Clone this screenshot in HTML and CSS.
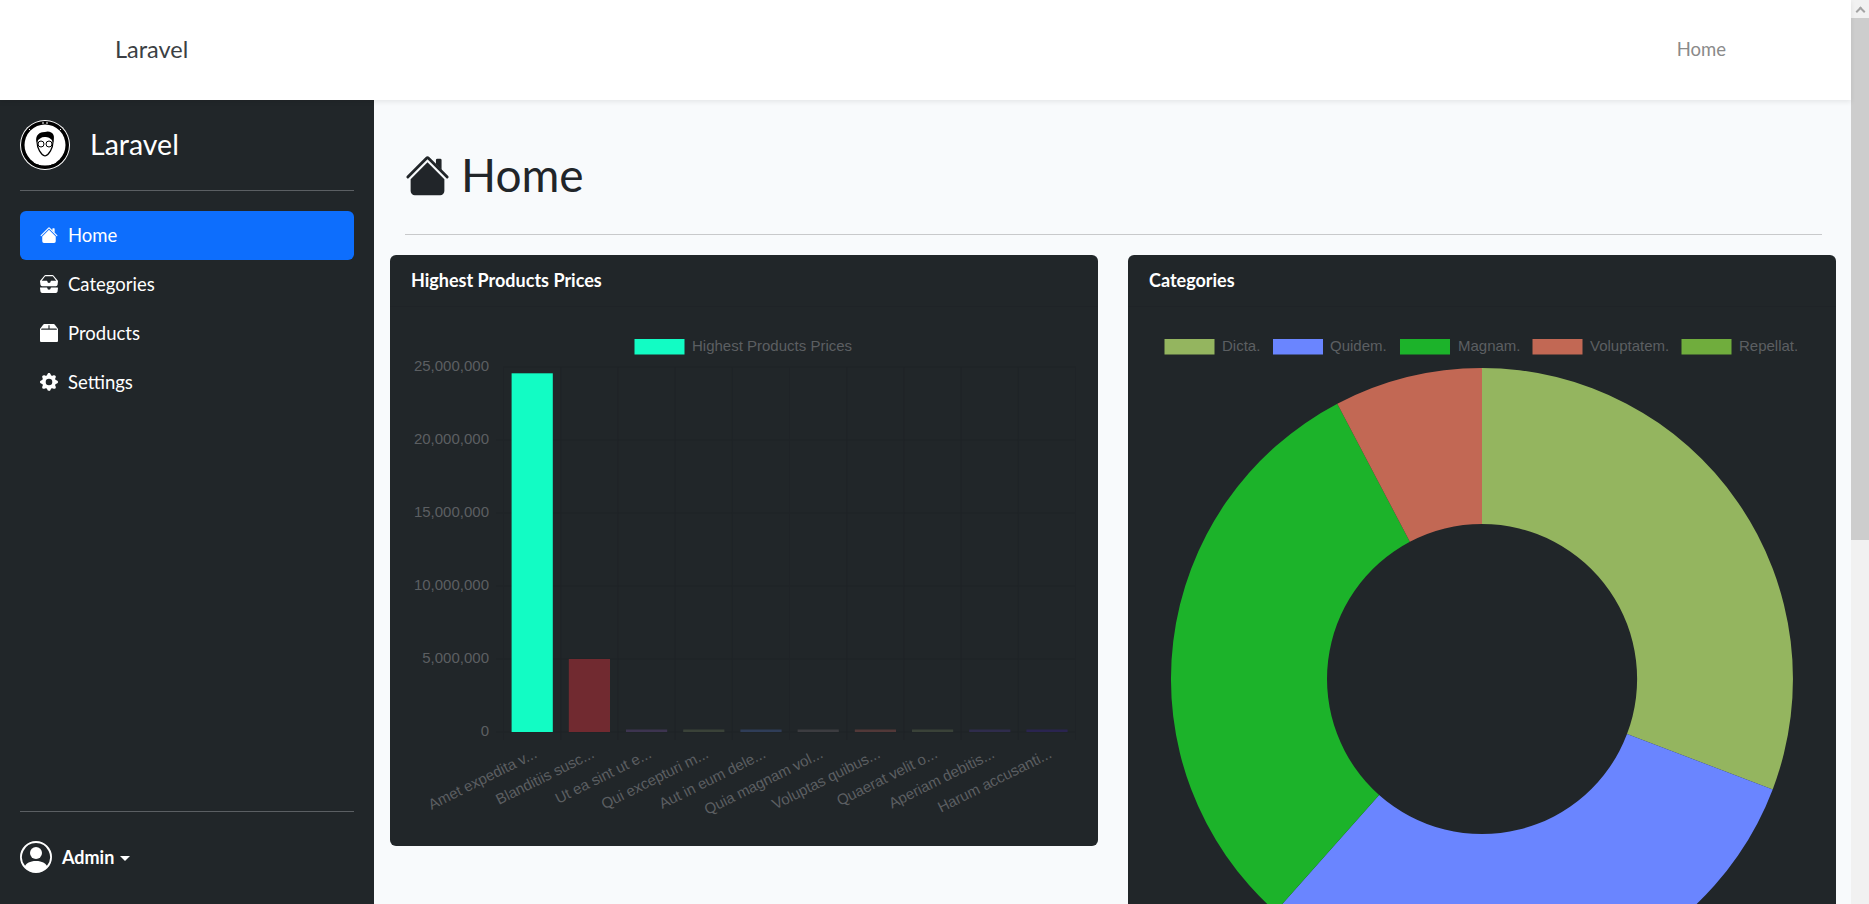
FILE: index.html
```html
<!DOCTYPE html>
<html lang="en">
<head>
<meta charset="utf-8">
<title>Home</title>
<link rel="stylesheet" href="styles.css">
</head>
<body>
<div class="window">
  <div class="page">
    <header class="topbar">
      <a class="topbar-brand">Laravel</a>
      <a class="topbar-link">Home</a>
    </header>
    <div class="shell">
      <aside class="sidebar">
        <div class="brand">
          <svg class="brand-logo" viewBox="0 0 50 50">
            <circle cx="25" cy="25" r="25" fill="#fff"/>
            <circle cx="25" cy="25" r="24" fill="#000"/>
            <circle cx="25" cy="25" r="20.500" fill="#fff"/>
            <path d="M25 13c-5 0-8 3-8 9 0 6 4 13 8 14 4-1 8-8 8-14 0-6-3-9-8-9z" fill="#fff" stroke="#000" stroke-width="1.200"/>
            <path d="M16.500 22c-1.500-7 3-10 8.500-10 3-1.500 7.500 0 8.500 3 1 2 0 5 0 7-3-4-5-5-9-5-3 0-6 2-8 5z" fill="#000"/>
            <circle cx="21" cy="24" r="3" fill="#fff" stroke="#000"/>
            <circle cx="29" cy="24" r="3" fill="#fff" stroke="#000"/>
            <path d="M19 44.500h12M14 42l3 1.500M36 42l-3 1.500" stroke="#fff" stroke-width="1.200"/>
            <path d="M22 3h2M26 3h2M9 9l1 1M41 9l-1 1" stroke="#fff" stroke-width="1"/>
          </svg>
          <span class="brand-name">Laravel</span>
        </div>
        <hr class="side-rule">
        <nav class="side-nav">
          <a class="side-link is-active">
            <svg class="side-icon" viewBox="0 0 16 16"><path fill-rule="evenodd" d="m8 3.293 6 6V13.500a1.500 1.500 0 0 1-1.500 1.500h-9A1.500 1.500 0 0 1 2 13.500V9.293l6-6zm5-.793V6l-2-2V2.500a.5.5 0 0 1 .5-.5h1a.5.5 0 0 1 .5.5z"/><path fill-rule="evenodd" d="M7.293 1.500a1 1 0 0 1 1.414 0l6.647 6.646a.5.5 0 0 1-.708.708L8 2.207 1.354 8.854a.5.5 0 1 1-.708-.708L7.293 1.500z"/></svg>
            Home
          </a>
          <a class="side-link">
            <svg class="side-icon" viewBox="0 0 16 16"><path d="M4.980 1a.5.5 0 0 0-.39.188L1.540 5H6a.5.5 0 0 1 .5.5 1.500 1.500 0 0 0 3 0A.5.5 0 0 1 10 5h4.460l-3.050-3.812A.5.5 0 0 0 11.020 1H4.980zM3.810.563A1.500 1.500 0 0 1 4.980 0h6.040a1.500 1.500 0 0 1 1.170.563l3.700 4.625a.5.5 0 0 1 .106.374l-.39 3.124A1.500 1.500 0 0 1 14.117 10H1.883A1.500 1.500 0 0 1 .394 8.686l-.39-3.124a.5.5 0 0 1 .106-.374L3.810.563zM.125 11.170A.5.5 0 0 1 .5 11H6a.5.5 0 0 1 .5.5 1.500 1.500 0 0 0 3 0 .5.5 0 0 1 .5-.5h5.500a.5.5 0 0 1 .496.562l-.39 3.124A1.500 1.500 0 0 1 14.117 16H1.883a1.500 1.500 0 0 1-1.489-1.314l-.39-3.124a.5.5 0 0 1 .121-.393z"/></svg>
            Categories
          </a>
          <a class="side-link">
            <svg class="side-icon" viewBox="0 0 16 16"><path d="M3.750 0a1 1 0 0 0-.8.4L.1 4.200a.5.5 0 0 0-.1.3V15a1 1 0 0 0 1 1h14a1 1 0 0 0 1-1V4.500a.5.5 0 0 0-.1-.3L13.050.4a1 1 0 0 0-.8-.4h-8.500zM15 4.667V5H1v-.333L1.500 4h6V1h1v3h6l.5.667z"/></svg>
            Products
          </a>
          <a class="side-link">
            <svg class="side-icon" viewBox="0 0 16 16"><path d="M9.405 1.050c-.413-1.400-2.397-1.400-2.810 0l-.1.34a1.464 1.464 0 0 1-2.105.872l-.31-.17c-1.283-.698-2.686.705-1.987 1.987l.169.311c.446.82.023 1.841-.872 2.105l-.34.1c-1.400.413-1.400 2.397 0 2.810l.34.1a1.464 1.464 0 0 1 .872 2.105l-.17.31c-.698 1.283.705 2.686 1.987 1.987l.311-.169a1.464 1.464 0 0 1 2.105.872l.1.34c.413 1.400 2.397 1.400 2.810 0l.1-.34a1.464 1.464 0 0 1 2.105-.872l.31.17c1.283.698 2.686-.705 1.987-1.987l-.169-.311a1.464 1.464 0 0 1 .872-2.105l.34-.1c1.400-.413 1.400-2.397 0-2.810l-.34-.1a1.464 1.464 0 0 1-.872-2.105l.17-.31c.698-1.283-.705-2.686-1.987-1.987l-.311.169a1.464 1.464 0 0 1-2.105-.872l-.1-.34zM8 10.930a2.929 2.929 0 1 1 0-5.860 2.929 2.929 0 0 1 0 5.858z"/></svg>
            Settings
          </a>
        </nav>
        <div class="side-footer">
          <hr class="side-rule">
          <a class="user">
            <svg class="user-icon" viewBox="0 0 16 16"><path d="M11 6a3 3 0 1 1-6 0 3 3 0 0 1 6 0z"/><path fill-rule="evenodd" d="M0 8a8 8 0 1 1 16 0A8 8 0 0 1 0 8zm8-7a7 7 0 0 0-5.468 11.370C3.242 11.226 4.805 10 8 10s4.757 1.225 5.468 2.370A7 7 0 0 0 8 1z"/></svg>
            <span class="user-name">Admin</span>
            <span class="caret"></span>
          </a>
        </div>
      </aside>
      <main class="main">
        <div class="heading">
          <h1 class="title">
            <svg class="title-icon" viewBox="0 0 16 16"><path fill-rule="evenodd" d="m8 3.293 6 6V13.500a1.500 1.500 0 0 1-1.500 1.500h-9A1.500 1.500 0 0 1 2 13.500V9.293l6-6zm5-.793V6l-2-2V2.500a.5.5 0 0 1 .5-.5h1a.5.5 0 0 1 .5.5z"/><path fill-rule="evenodd" d="M7.293 1.500a1 1 0 0 1 1.414 0l6.647 6.646a.5.5 0 0 1-.708.708L8 2.207 1.354 8.854a.5.5 0 1 1-.708-.708L7.293 1.500z"/></svg>
            Home
          </h1>
          <hr class="main-rule">
        </div>
        <div class="cards">
          <section class="card">
            <h2 class="card-head">Highest Products Prices</h2>
            <svg class="chart bar-chart" viewBox="0 0 708 539">
              <g class="grid">
                <path d="M113 60H686M106 133H686M106 206H686M106 279H686M106 352H686M106 425H686"/>
                <path d="M113.500 60V433M170.700 60V433M227.900 60V433M285.100 60V433M342.300 60V433M399.500 60V433M456.700 60V433M513.900 60V433M571.100 60V433M628.300 60V433M685.500 60V433"/>
              </g>
              <rect x="244.500" y="32" width="50" height="15.500" fill="#12fcc4"/>
              <text class="legend" x="302" y="44">Highest Products Prices</text>
              <g class="y-labels">
                <text x="99" y="63.500">25,000,000</text>
                <text x="99" y="136.500">20,000,000</text>
                <text x="99" y="209.500">15,000,000</text>
                <text x="99" y="282.500">10,000,000</text>
                <text x="99" y="355.500">5,000,000</text>
                <text x="99" y="428.500">0</text>
              </g>
              <rect x="121.600" y="66.300" width="41.200" height="358.700" fill="#12fcc4"/>
              <rect x="178.800" y="352" width="41.200" height="73" fill="#712a30"/>
              <rect x="236" y="422.500" width="41.200" height="2.500" fill="#3d3450"/>
              <rect x="293.200" y="422.500" width="41.200" height="2.500" fill="#3a4238"/>
              <rect x="350.400" y="422.500" width="41.200" height="2.500" fill="#2f3d58"/>
              <rect x="407.600" y="422.500" width="41.200" height="2.500" fill="#3c3c40"/>
              <rect x="464.800" y="422.500" width="41.200" height="2.500" fill="#523838"/>
              <rect x="522" y="422.500" width="41.200" height="2.500" fill="#3a4238"/>
              <rect x="579.200" y="422.500" width="41.200" height="2.500" fill="#2f2c4c"/>
              <rect x="636.400" y="422.500" width="41.200" height="2.500" fill="#2a2450"/>
              <g class="x-labels">
                <text transform="translate(148 450) rotate(-26.500)">Amet expedita v...</text>
                <text transform="translate(205.200 450) rotate(-26.500)">Blanditiis susc...</text>
                <text transform="translate(262.400 450) rotate(-26.500)">Ut ea sint ut e...</text>
                <text transform="translate(319.600 450) rotate(-26.500)">Qui excepturi m...</text>
                <text transform="translate(376.800 450) rotate(-26.500)">Aut in eum dele...</text>
                <text transform="translate(434 450) rotate(-26.500)">Quia magnam vol...</text>
                <text transform="translate(491.200 450) rotate(-26.500)">Voluptas quibus...</text>
                <text transform="translate(548.400 450) rotate(-26.500)">Quaerat velit o...</text>
                <text transform="translate(605.600 450) rotate(-26.500)">Aperiam debitis...</text>
                <text transform="translate(662.800 450) rotate(-26.500)">Harum accusanti...</text>
              </g>
            </svg>
          </section>
          <section class="card">
            <h2 class="card-head">Categories</h2>
            <svg class="chart donut-chart" viewBox="0 0 708 760">
              <g class="legend">
                <rect x="36.500" y="32" width="50" height="15.500" fill="#94b55f"/>
                <text x="94" y="44">Dicta.</text>
                <rect x="145" y="32" width="50" height="15.500" fill="#6a85ff"/>
                <text x="202" y="44">Quidem.</text>
                <rect x="272" y="32" width="50" height="15.500" fill="#1cb32a"/>
                <text x="330" y="44">Magnam.</text>
                <rect x="404.500" y="32" width="50" height="15.500" fill="#c26854"/>
                <text x="462" y="44">Voluptatem.</text>
                <rect x="553.500" y="32" width="50" height="15.500" fill="#70ad3d"/>
                <text x="611" y="44">Repellat.</text>
              </g>
              <g transform="translate(354 372)">
                <path d="M0-311A311 311 0 0 1 290.700 110.400L145 55.100A155 155 0 0 0 0-155Z" fill="#94b55f"/>
                <path d="M290.700 110.400A311 311 0 0 1-206.500 232.600L-102.900 115.900A155 155 0 0 0 145 55.100Z" fill="#6a85ff"/>
                <path d="M-206.500 232.600A311 311 0 0 1-144.700-275.300L-72.100-137.200A155 155 0 0 0-102.900 115.900Z" fill="#1cb32a"/>
                <path d="M-144.700-275.300A311 311 0 0 1 0-311L0-155A155 155 0 0 0-72.100-137.200Z" fill="#c26854"/>
              </g>
            </svg>
          </section>
        </div>
      </main>
    </div>
  </div>
  <div class="scrollbar" aria-hidden="true">
    <span class="scroll-btn"><span class="scroll-arrow"></span></span>
    <span class="scroll-thumb"></span>
  </div>
</div>
</body>
</html>
```
FILE: styles.css
```css
* { box-sizing: border-box; }
html, body { margin: 0; height: 100%; overflow: hidden; }
body {
  font-family: Lato, "Noto Sans", sans-serif;
  font-size: 18.500px;
  color: #212529;
  background: #f8fafc;
}
.window { display: flex; height: 904px; }
.page { flex: 1; min-width: 0; display: flex; flex-direction: column; }

.topbar {
  flex: none;
  height: 100px;
  display: flex;
  align-items: center;
  justify-content: space-between;
  padding: 0 125px 2px 115px;
  background: #fff;
  box-shadow: 0 2px 5px rgba(0,0,0,.08);
  position: relative;
  z-index: 1;
}
.topbar-brand { font-size: 23.500px; color: #3b3f44; }
.topbar-link { font-size: 18.500px; color: #8a8a8a; }

.shell { flex: 1; min-height: 0; display: flex; }
.sidebar {
  flex: none;
  width: 374px;
  display: flex;
  flex-direction: column;
  padding: 20px;
  background: #212629;
  color: #fff;
}
.brand { display: flex; align-items: center; gap: 20px; height: 50px; margin-bottom: 20px; }
.brand-logo { width: 50px; height: 50px; flex: none; }
.brand-name { font-size: 28.500px; padding-bottom: 2px; }
.side-rule { margin: 0; border: 0; border-top: 1px solid #5b5f63; }
.side-nav { display: flex; flex-direction: column; margin-top: 20px; }
.side-link { height: 49px; display: flex; align-items: center; gap: 10px; padding: 0 20px 2px; border-radius: 6px; color: #fff; }
.side-link.is-active { background: #0d6efd; }
.side-icon { width: 18px; height: 18px; fill: currentColor; flex: none; }
.side-footer { margin-top: auto; }
.user { display: flex; align-items: center; margin-top: 29px; margin-bottom: 11px; font-weight: 700; font-size: 18px; }
.user-icon { width: 32px; height: 32px; fill: #fff; flex: none; margin-right: 10px; }
.caret { width: 0; height: 0; margin-left: 6px; margin-top: 2px; border-top: 5.500px solid #fff; border-left: 5.500px solid transparent; border-right: 5.500px solid transparent; }

.main { flex: 1; min-width: 0; padding: 0 15px 0 16px; }
.heading { padding: 47px 14px 0 15px; }
.title { margin: 0; display: flex; align-items: center; gap: 11px; font-size: 46px; font-weight: 400; line-height: 56px; }
.title-icon { width: 45px; height: 45px; fill: #212529; flex: none; }
.main-rule { margin: 31px 0 20px; border: 0; border-top: 1px solid #c8c9cb; }

.cards { display: grid; grid-template-columns: 1fr 1fr; gap: 30px; align-items: start; }
.card { background: #212629; border-radius: 6px; color: #fff; }
.card-head { margin: 0; height: 52px; padding: 0 21px 1px; display: flex; align-items: center; font-size: 18px; font-weight: 700; border-bottom: 1px solid #1f2327; }
.chart { display: block; width: 100%; font-family: "Liberation Sans", Arial, sans-serif; font-size: 15px; }
.chart text { fill: #5c5f62; }
.grid { fill: none; stroke: #1f2327; stroke-width: 1; }
.y-labels { text-anchor: end; }
.x-labels { text-anchor: end; }

.scrollbar { flex: none; width: 18px; height: 100%; display: flex; flex-direction: column; background: #f1f1f1; }
.scroll-btn { height: 18px; display: flex; align-items: center; justify-content: center; }
.scroll-arrow { width: 7px; height: 7px; margin-top: 5px; border-top: 2px solid #a3a3a3; border-left: 2px solid #a3a3a3; transform: rotate(45deg); }
.scroll-thumb { height: 522px; background: #cdcdcd; }
```
